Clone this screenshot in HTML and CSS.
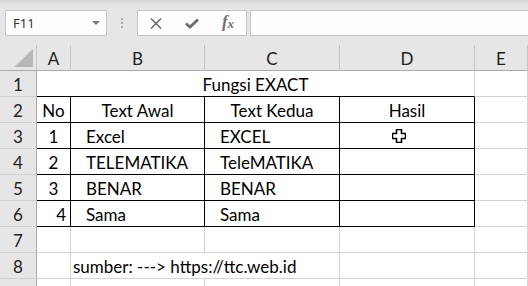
FILE: index.html
```html
<!DOCTYPE html>
<html lang="en">
<head>
    <meta charset="UTF-8">
    <title>Fungsi EXACT</title>
    <link rel="stylesheet" href="styles.css">
</head>
<body>
    <div class="toolbar">
        <div class="namebox">
            <span>F11</span>
            <svg class="caret" width="8" height="4" viewBox="0 0 8 4"><polygon points="0,0 8,0 4,4" fill="#7a7a7a"/></svg>
        </div>
        <div class="dots"><i></i><i></i><i></i></div>
        <div class="fxbox">
            <span class="fx-btn">
                <svg width="12" height="11" viewBox="0 0 12 11"><path d="M1 0.5 L11 10.5 M11 0.5 L1 10.5" stroke="#6e6e6e" stroke-width="1.6" fill="none"/></svg>
            </span>
            <span class="fx-btn">
                <svg width="14" height="11" viewBox="0 0 14 11"><path d="M1 5.5 L5 9 L13 1.5" stroke="#6e6e6e" stroke-width="2.8" fill="none"/></svg>
            </span>
            <span class="fx-btn fx-text"><i>f</i><i class="sub">x</i></span>
        </div>
        <div class="formula"></div>
    </div>

    <div class="sheet">
        <!-- column headers -->
        <div class="corner">
            <svg width="19" height="18" viewBox="0 0 19 18"><polygon points="19,0 19,18 0,18" fill="#b8b8b8"/></svg>
        </div>
        <div class="colhead">A</div>
        <div class="colhead">B</div>
        <div class="colhead">C</div>
        <div class="colhead">D</div>
        <div class="colhead">E</div>

        <!-- row 1 -->
        <div class="rowhead">1</div>
        <div class="cell title">Fungsi EXACT</div>
        <div class="cell"></div>

        <!-- row 2 -->
        <div class="rowhead">2</div>
        <div class="cell tb center">No</div>
        <div class="cell tb center">Text Awal</div>
        <div class="cell tb center">Text Kedua</div>
        <div class="cell tb center">Hasil</div>
        <div class="cell"></div>

        <!-- row 3 -->
        <div class="rowhead">3</div>
        <div class="cell tb center">1</div>
        <div class="cell tb indent">Excel</div>
        <div class="cell tb indent">EXCEL</div>
        <div class="cell tb cursor-cell">
            <svg class="cursor" width="14" height="14" viewBox="0 0 14 14"><polygon points="4.5,0.5 9.5,0.5 9.5,4.5 13.5,4.5 13.5,9.5 9.5,9.5 9.5,13.5 4.5,13.5 4.5,9.5 0.5,9.5 0.5,4.5 4.5,4.5" fill="#fff" stroke="#000" stroke-width="1.6"/></svg>
        </div>
        <div class="cell"></div>

        <!-- row 4 -->
        <div class="rowhead">4</div>
        <div class="cell tb center">2</div>
        <div class="cell tb indent">TELEMATIKA</div>
        <div class="cell tb indent">TeleMATIKA</div>
        <div class="cell tb"></div>
        <div class="cell"></div>

        <!-- row 5 -->
        <div class="rowhead">5</div>
        <div class="cell tb center">3</div>
        <div class="cell tb indent">BENAR</div>
        <div class="cell tb indent">BENAR</div>
        <div class="cell tb"></div>
        <div class="cell"></div>

        <!-- row 6 -->
        <div class="rowhead">6</div>
        <div class="cell tb num">4</div>
        <div class="cell tb indent">Sama</div>
        <div class="cell tb indent">Sama</div>
        <div class="cell tb"></div>
        <div class="cell"></div>

        <!-- row 7 -->
        <div class="rowhead">7</div>
        <div class="cell"></div>
        <div class="cell"></div>
        <div class="cell"></div>
        <div class="cell"></div>
        <div class="cell"></div>

        <!-- row 8 -->
        <div class="rowhead">8</div>
        <div class="cell"></div>
        <div class="cell source">sumber: ---&gt; https://ttc.web.id</div>
        <div class="cell"></div>
        <div class="cell"></div>

        <!-- row 9, only its top edge is in view -->
        <div class="rowhead"></div>
        <div class="cell"></div>
        <div class="cell"></div>
        <div class="cell"></div>
        <div class="cell"></div>
        <div class="cell"></div>
    </div>
</body>
</html>
```

FILE: styles.css
```css
body {
    margin: 0;
    width: 528px;
    height: 286px;
    overflow: hidden;
    background-color: #fff;
    font-family: Lato, "Open Sans", sans-serif;
}

/* formula bar */

.toolbar {
    display: flex;
    align-items: flex-start;
    height: 45px;
    padding-top: 10px;
    box-sizing: border-box;
    background: linear-gradient(#d6d6d6, #e6e6e6 6px);
}

.namebox {
    display: flex;
    align-items: center;
    justify-content: space-between;
    width: 102px;
    height: 26px;
    margin-left: 5px;
    padding: 0 6px 0 7px;
    box-sizing: border-box;
    border: 1px solid #c6c6c6;
    background-color: #fdfdfd;
    font-family: "Noto Sans", sans-serif;
    font-size: 13px;
    color: #333;
}

.dots {
    display: flex;
    flex-direction: column;
    gap: 2px;
    margin: 8px 14px 0 14px;
}

.dots i {
    width: 2px;
    height: 2px;
    background-color: #a8a8a8;
}

.fxbox {
    display: flex;
    width: 110px;
    height: 26px;
    box-sizing: border-box;
    border: 1px solid #c6c6c6;
    background-color: #fdfdfd;
}

.fx-btn {
    display: flex;
    align-items: center;
    justify-content: center;
    width: 36px;
}

.fx-text {
    font-family: "Liberation Serif", serif;
    font-size: 17px;
    font-weight: bold;
    color: #707070;
    padding-bottom: 2px;
}

.fx-text .sub {
    font-size: 13px;
    margin-top: 4px;
}

.formula {
    flex: 1;
    height: 26px;
    margin-left: 3px;
    box-sizing: border-box;
    border: 1px solid #c6c6c6;
    border-right: none;
    background-color: #fdfdfd;
}

/* sheet */

.sheet {
    display: grid;
    grid-template-columns: 37px 34px 134px 135px 135px 1fr;
    grid-auto-rows: 26px;
    font-size: 17px;
    line-height: 25px;
}

.sheet > div {
    box-sizing: border-box;
    white-space: nowrap;
}

.corner {
    display: flex;
    align-items: flex-end;
    justify-content: flex-end;
    padding: 0 3px 3px 0;
    background-color: #e6e6e6;
    border-right: 1px solid #c6c6c6;
    border-bottom: 1px solid #ababab;
}

.colhead {
    text-align: center;
    color: #222;
    background-color: #e6e6e6;
    border-right: 1px solid #c6c6c6;
    border-bottom: 1px solid #ababab;
    padding-top: 1px;
}

.rowhead {
    text-align: center;
    color: #222;
    background-color: #e6e6e6;
    border-right: 1px solid #ababab;
    border-bottom: 1px solid #d0d0d0;
    padding-top: 1px;
}

.cell {
    border-right: 1px solid #d4d4d4;
    border-bottom: 1px solid #d4d4d4;
    color: #000;
    padding-top: 1px;
}

.cell.title {
    grid-column: span 4;
    text-align: center;
    border-bottom-color: #000;
}

.cell.tb {
    border-right-color: #000;
    border-bottom-color: #000;
}

.center {
    text-align: center;
}

.indent {
    padding-left: 15px;
}

.num {
    text-align: right;
    padding-right: 4px;
}

.source {
    grid-column: span 2;
    padding-left: 2px;
}

.cursor-cell {
    position: relative;
}

.cursor {
    position: absolute;
    left: 52px;
    top: 6px;
}
```
